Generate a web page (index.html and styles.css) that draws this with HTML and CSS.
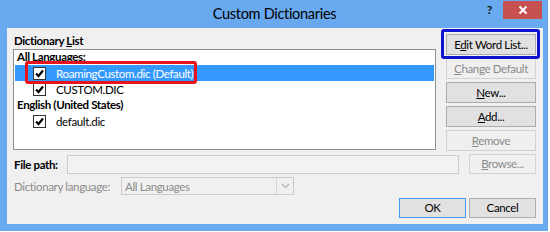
FILE: index.html
```html
<!DOCTYPE html>
<html>
<head>
<meta charset="utf-8">
<link rel="stylesheet" href="styles.css">
</head>
<body>
<div class="window">
  <div class="titlebar">
    <div></div>
    <div class="title">Custom Dictionaries</div>
    <div class="controls">
      <span class="help">?</span>
      <span class="close"><svg width="10" height="10" viewBox="0 0 10 10"><path d="M1.5 1.5 L8.5 8.5 M8.5 1.5 L1.5 8.5" stroke="#fff" stroke-width="2" fill="none"/></svg></span>
    </div>
  </div>
  <div class="content">
    <div class="top">
      <div class="listcol">
        <div class="label bold">Dictionary <u>L</u>ist</div>
        <div class="list">
          <div class="group first">All Languages:</div>
          <div class="item selected"><span class="cb"><svg width="11" height="11" viewBox="0 0 11 11"><path d="M2 5.5 L4.5 8 L9 2.5" stroke="#000" stroke-width="2.2" fill="none"/></svg></span>RoamingCustom.dic (Default)</div>
          <div class="item"><span class="cb"><svg width="11" height="11" viewBox="0 0 11 11"><path d="M2 5.5 L4.5 8 L9 2.5" stroke="#000" stroke-width="2.2" fill="none"/></svg></span>CUSTOM.DIC</div>
          <div class="group">English (United States)</div>
          <div class="item"><span class="cb"><svg width="11" height="11" viewBox="0 0 11 11"><path d="M2 5.5 L4.5 8 L9 2.5" stroke="#000" stroke-width="2.2" fill="none"/></svg></span>default.dic</div>
          <div class="redmark"></div>
        </div>
      </div>
      <div class="btncol">
        <div class="btnwrap"><button class="btn">E<u>d</u>it Word List...</button><div class="bluemark"></div></div>
        <button class="btn disabled"><u>C</u>hange Default</button>
        <button class="btn"><u>N</u>ew...</button>
        <button class="btn"><u>A</u>dd...</button>
        <button class="btn disabled"><u>R</u>emove</button>
      </div>
    </div>
    <div class="pathrow">
      <div class="pathlabel bold">File path:</div>
      <div class="input"></div>
      <button class="btn small disabled"><u>B</u>rowse...</button>
    </div>
    <div class="langrow">
      <div class="langlabel">Dictionary language:</div>
      <div class="select"><span class="selval">All Languages</span><span class="arrow"><svg width="9" height="6" viewBox="0 0 9 6"><path d="M1 1 L4.5 4.5 L8 1" stroke="#b0b0b0" stroke-width="1.2" fill="none"/></svg></span></div>
    </div>
    <div class="actions">
      <button class="btn small default">OK</button>
      <button class="btn small">Cancel</button>
    </div>
  </div>
</div>
</body>
</html>
```

FILE: styles.css
```css
* { box-sizing: border-box; }
body {
  margin: 0;
  background: #ffffff;
  font-family: Lato, "Noto Sans", sans-serif;
  font-size: 11.5px;
  letter-spacing: -0.35px;
  color: #000;
}
.window {
  width: 548px;
  height: 231px;
  background: #69a9ef;
  display: flex;
  flex-direction: column;
}
.titlebar {
  height: 28px;
  display: grid;
  grid-template-columns: 1fr auto 1fr;
  align-items: start;
}
.title {
  font-size: 14.5px;
  letter-spacing: -0.3px;
  line-height: 28px;
  color: #000;
  padding-left: 1px;
}
.controls {
  display: flex;
  justify-content: flex-end;
  align-items: flex-start;
  padding-right: 6px;
}
.help {
  font-weight: bold;
  font-size: 12px;
  line-height: 18px;
  margin-top: 1px;
  margin-right: 11px;
  color: #111;
}
.close {
  width: 39px;
  height: 18px;
  margin-top: 1px;
  background: #c75050;
  display: flex;
  align-items: center;
  justify-content: center;
}
.content {
  margin: 0 5px 0 7px;
  height: 196px;
  background: #f0f0f0;
}
.bold { font-weight: bold; }
.top {
  display: flex;
  padding: 6px 7px 0 6px;
  gap: 10px;
}
.listcol { width: 423px; }
.label {
  height: 15px;
  line-height: 14px;
  padding-left: 1px;
}
.list {
  position: relative;
  height: 101px;
  background: #fff;
  border: 1px solid #8e8f8f;
}
.group {
  height: 16px;
  line-height: 16px;
  padding-left: 3px;
  font-weight: bold;
  white-space: nowrap;
}
.group.first { height: 15px; line-height: 14px; }
.item {
  height: 16px;
  display: flex;
  align-items: center;
  padding-left: 19px;
  margin: 0 1px;
  white-space: nowrap;
}
.item.selected {
  background: #3399ff;
  color: #fff;
}
.cb {
  width: 13px;
  height: 13px;
  border: 1px solid #333;
  background: #fff;
  display: flex;
  align-items: center;
  justify-content: center;
  margin-right: 10px;
  margin-left: -1px;
}
.redmark {
  position: absolute;
  left: 11px;
  top: 11px;
  width: 172px;
  height: 23px;
  border: 3px solid #e8131b;
  border-radius: 3px;
}
.btncol {
  width: 90px;
  display: flex;
  flex-direction: column;
  gap: 3px;
}
.btnwrap { position: relative; }
.bluemark {
  position: absolute;
  left: -5px;
  top: -5px;
  right: -4px;
  bottom: -4px;
  border: 3px solid #0d14cc;
  border-radius: 3px;
}
.btn {
  width: 90px;
  height: 21px;
  padding: 0;
  font-family: inherit;
  font-size: inherit;
  letter-spacing: inherit;
  color: #000;
  background: #e1e1e1;
  border: 1px solid #adadad;
  text-align: center;
  line-height: 18px;
  white-space: nowrap;
}
.btn.small { width: 67px; height: 20px; }
.btn.disabled {
  background: #efefef;
  border-color: #d2d2d2;
  color: #8b8b8b;
}
.btn.default { border-color: #3d9bf2; }
.pathrow {
  display: flex;
  align-items: center;
  margin-top: 3px;
  padding-left: 7px;
  height: 20px;
}
.pathlabel { width: 53px; white-space: nowrap; }
.input {
  width: 392px;
  height: 19px;
  background: #f2f2f2;
  border: 1px solid #cbcbcb;
  margin-right: 10px;
}
.langrow {
  display: flex;
  align-items: center;
  margin-top: 3px;
  padding-left: 7px;
  height: 18px;
}
.langlabel { width: 107px; color: #8b8b8b; white-space: nowrap; }
.select {
  width: 173px;
  height: 18px;
  border: 1px solid #cbcbcb;
  background: #f0f0f0;
  display: flex;
  align-items: center;
  color: #8b8b8b;
}
.selval { flex: 1; padding-left: 3px; }
.arrow {
  width: 17px;
  height: 16px;
  border-left: 1px solid #d4d4d4;
  display: flex;
  align-items: center;
  justify-content: center;
}
.actions {
  display: flex;
  justify-content: flex-end;
  gap: 3px;
  margin-top: 3px;
  padding-right: 7px;
}
```
